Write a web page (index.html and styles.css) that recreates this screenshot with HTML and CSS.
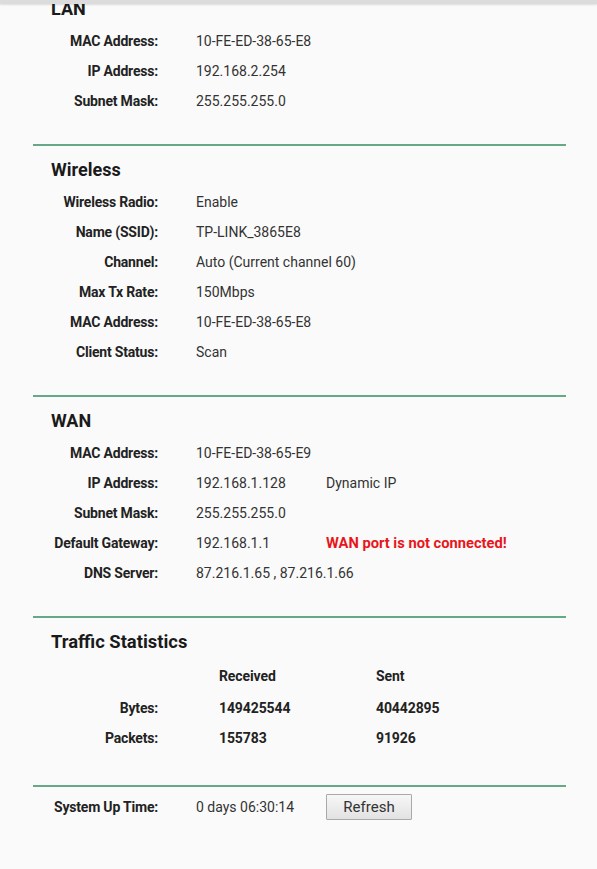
FILE: index.html
```html
<!DOCTYPE html>
<html>
<head>
<meta charset="utf-8">
<title>Status</title>
<link rel="stylesheet" href="styles.css">
</head>
<body>
<div class="topbar"></div>
<div id="main">

<div class="section first">
  <h2>LAN</h2>
  <div class="info">
    <div class="lbl">MAC Address:</div><div class="val">10-FE-ED-38-65-E8</div><div></div>
    <div class="lbl">IP Address:</div><div class="val">192.168.2.254</div><div></div>
    <div class="lbl">Subnet Mask:</div><div class="val">255.255.255.0</div><div></div>
  </div>
</div>

<div class="section">
  <h2>Wireless</h2>
  <div class="info">
    <div class="lbl">Wireless Radio:</div><div class="val">Enable</div><div></div>
    <div class="lbl">Name (SSID):</div><div class="val">TP-LINK_3865E8</div><div></div>
    <div class="lbl">Channel:</div><div class="val wide">Auto (Current channel 60)</div><div></div>
    <div class="lbl">Max Tx Rate:</div><div class="val">150Mbps</div><div></div>
    <div class="lbl">MAC Address:</div><div class="val">10-FE-ED-38-65-E8</div><div></div>
    <div class="lbl">Client Status:</div><div class="val">Scan</div><div></div>
  </div>
</div>

<div class="section">
  <h2>WAN</h2>
  <div class="info">
    <div class="lbl">MAC Address:</div><div class="val">10-FE-ED-38-65-E9</div><div></div>
    <div class="lbl">IP Address:</div><div class="val">192.168.1.128</div><div class="extra">Dynamic IP</div>
    <div class="lbl">Subnet Mask:</div><div class="val">255.255.255.0</div><div></div>
    <div class="lbl">Default Gateway:</div><div class="val">192.168.1.1</div><div class="extra warn">WAN port is not connected!</div>
    <div class="lbl">DNS Server:</div><div class="val wide">87.216.1.65 , 87.216.1.66</div><div></div>
  </div>
</div>

<div class="section traffic">
  <h2>Traffic Statistics</h2>
  <div class="stats">
    <div class="lbl head"></div><div class="num head">Received</div><div class="num head">Sent</div>
    <div class="lbl">Bytes:</div><div class="num">149425544</div><div class="num">40442895</div>
    <div class="lbl">Packets:</div><div class="num">155783</div><div class="num">91926</div>
  </div>
</div>

<div class="section uptime">
  <div class="info">
    <div class="lbl">System Up Time:</div><div class="val">0 days 06:30:14</div><div class="extra"><button class="btn">Refresh</button></div>
  </div>
</div>

</div>
</body>
</html>
```

FILE: styles.css
```css
html, body{
    margin:0;
    padding:0;
    background:#fafafa;
}
body{
    font-family:Roboto, "Liberation Sans", sans-serif;
    font-size:14px;
    color:#333;
    overflow:hidden;
}
.topbar{
    position:fixed;
    top:0;
    left:0;
    right:0;
    height:4px;
    background:#dcdcdc;
    box-shadow:0 1px 2px rgba(0,0,0,0.12);
    z-index:10;
}
#main{
    margin-left:33px;
    width:533px;
    margin-top:-15px;
}
.section{
    border-top:2px solid #67a887;
    padding:12px 0 28px 0;
}
.section.first{
    border-top:0;
}
h2{
    margin:0 0 5px 0;
    padding-left:18px;
    font-size:18px;
    line-height:24px;
    font-weight:bold;
    color:#1a1a1a;
}
.traffic h2{
    font-size:18.4px;
    margin-bottom:7px;
}
.info{
    display:grid;
    grid-template-columns:125px 168px 1fr;
    line-height:30px;
}
.stats{
    display:grid;
    grid-template-columns:125px 218px 1fr;
    line-height:30px;
}
.lbl{
    text-align:right;
    font-weight:bold;
    color:#222;
    letter-spacing:-0.2px;
    white-space:nowrap;
}
.val{
    padding-left:38px;
    white-space:nowrap;
}
.extra{
    white-space:nowrap;
}
.warn{
    color:#e8161c;
    font-weight:bold;
    font-size:14.7px;
}
.traffic{
    padding-bottom:32px;
}
.num{
    font-weight:bold;
    color:#222;
    letter-spacing:-0.1px;
}
.stats .num:nth-child(3n+2){
    padding-left:61px;
}
.stats .head{
    padding-bottom:2px;
}
.uptime{
    padding-top:5px;
}
.btn{
    width:86px;
    height:26px;
    padding:0;
    margin-top:2px;
    vertical-align:top;
    font-family:Roboto, "Liberation Sans", sans-serif;
    font-size:15px;
    color:#333;
    background:linear-gradient(#f7f7f7, #e2e2e2);
    border:1px solid #a9a9a9;
    border-radius:1px;
}
```
